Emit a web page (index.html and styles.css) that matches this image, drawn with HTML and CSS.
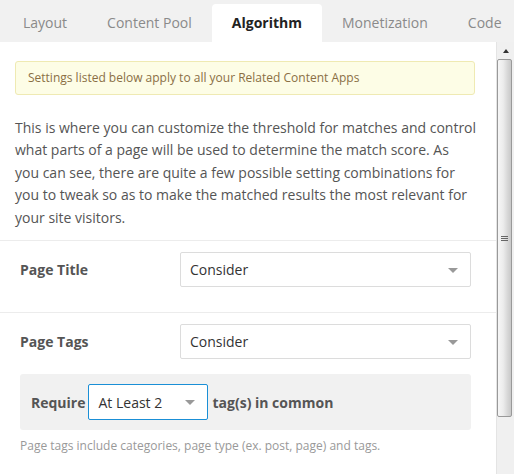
FILE: index.html
```html
<!DOCTYPE html>
<html>
<head>
<meta charset="utf-8">
<link rel="stylesheet" href="styles.css">
</head>
<body>
<div class="tabs">
  <div class="tab">Layout</div>
  <div class="tab">Content Pool</div>
  <div class="tab active">Algorithm</div>
  <div class="tab">Monetization</div>
  <div class="tab">Code</div>
</div>
<div class="main">
  <div class="panel">
    <div class="intro">
      <div class="notice">Settings listed below apply to all your Related Content Apps</div>
      <p class="desc">This is where you can customize the threshold for matches and control what parts of a page will be used to determine the match score. As<br>you can see, there are quite a few possible setting combinations for you to tweak so as to make the matched results the most relevant for your site visitors.</p>
    </div>
    <div class="group">
      <div class="row">
        <div class="label">Page Title</div>
        <div class="select wide"><span>Consider</span><i class="caret"></i></div>
      </div>
    </div>
    <div class="group">
      <div class="row">
        <div class="label">Page Tags</div>
        <div class="select wide"><span>Consider</span><i class="caret"></i></div>
      </div>
      <div class="require">
        <span class="strong req">Require</span>
        <div class="select small focus"><span>At Least 2</span><i class="caret"></i></div>
        <span class="strong common">tag(s) in common</span>
      </div>
      <div class="help">Page tags include categories, page type (ex. post, page) and tags.</div>
    </div>
  </div>
  <div class="scrollbar">
    <div class="sb-up"><i class="sb-arrow"></i></div>
    <div class="sb-thumb"><i class="grip"></i><i class="grip"></i><i class="grip"></i></div>
    <div class="sb-rest"></div>
  </div>
</div>
</body>
</html>
```
FILE: styles.css
```css
* { box-sizing: border-box; }
html, body { margin: 0; padding: 0; }
body {
  width: 514px;
  height: 474px;
  overflow: hidden;
  font-family: "Open Sans", "DejaVu Sans", sans-serif;
  background: #ffffff;
  color: #555;
}
.tabs {
  display: flex;
  height: 42px;
  background: #f1f1f1;
  padding: 4px 0 0 3px;
  align-items: stretch;
}
.tab {
  padding: 0 20px;
  font-size: 14px;
  line-height: 38px;
  color: #8a8a8a;
  white-space: nowrap;
}
.tab.active {
  background: #fff;
  color: #222;
  font-weight: bold;
  border-radius: 4px 4px 0 0;
}
.main {
  display: flex;
  height: 432px;
}
.panel {
  flex: 1;
  min-width: 0;
}
.intro {
  padding: 19px 15px 0 15px;
}
.notice {
  margin-right: 6px;
  background: #fdfde6;
  border: 1px solid #efeab3;
  border-radius: 3px;
  padding: 7px 12px;
  font-size: 12px;
  line-height: 18px;
  color: #8a6f45;
}
.desc {
  margin: 22px 0 11px;
  font-size: 14px;
  line-height: 22.4px;
  color: #555;
}
.group {
  border-top: 1px solid #ececec;
  padding: 11px 25px 10px 20px;
}
.row {
  display: flex;
  align-items: center;
  margin-bottom: 15px;
}
.label {
  width: 160px;
  font-size: 14px;
  font-weight: bold;
  color: #555;
}
.select {
  position: relative;
  display: flex;
  align-items: center;
  height: 35px;
  border: 1px solid #dcdcdc;
  border-radius: 2px;
  padding-left: 9px;
  font-size: 14px;
  color: #333;
  background: #fff;
}
.select.wide { flex: 1; }
.select.small { width: 120px; height: 36px; }
.select.focus { border-color: #1a8fd6; }
.caret {
  position: absolute;
  right: 12px;
  top: 50%;
  margin-top: -2px;
  width: 0;
  height: 0;
  border-left: 5px solid transparent;
  border-right: 5px solid transparent;
  border-top: 5px solid #999;
}
.require {
  display: flex;
  align-items: center;
  background: #f1f1f1;
  border-radius: 3px;
  padding: 10px 11px;
}
.strong {
  font-size: 14px;
  font-weight: bold;
  color: #555;
}
.req { margin-right: 3px; }
.common { margin-left: 4px; }
.help {
  margin-top: 7px;
  font-size: 12px;
  line-height: 18px;
  color: #999;
}
.scrollbar {
  width: 18px;
  display: flex;
  flex-direction: column;
  background: #f0f0f0;
  border-left: 1px solid #e4e4e4;
}
.sb-up {
  height: 17px;
  display: flex;
  align-items: center;
  justify-content: center;
}
.sb-arrow {
  width: 0;
  height: 0;
  border-left: 3px solid transparent;
  border-right: 3px solid transparent;
  border-bottom: 4px solid #333;
  margin-left: 1px;
}
.sb-thumb {
  height: 358px;
  width: 15px;
  border: 1px solid #999;
  border-radius: 2px;
  background: linear-gradient(to right, #f6f6f6 0%, #ececec 40%, #d6d6d6 75%, #c9c9c9 100%);
  display: flex;
  flex-direction: column;
  align-items: center;
  justify-content: center;
  gap: 1px;
}
.grip {
  display: block;
  width: 7px;
  height: 1px;
  background: #666;
}
.sb-rest { flex: 1; }
```
